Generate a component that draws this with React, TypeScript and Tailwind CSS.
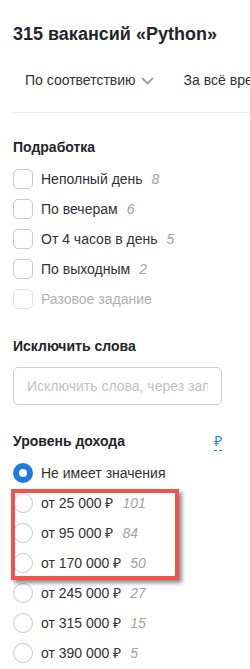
const partTime = [
    { label: 'Неполный день', count: 8 },
    { label: 'По вечерам', count: 6 },
    { label: 'От 4 часов в день', count: 5 },
    { label: 'По выходным', count: 2 },
];

const salaries = [
    { label: 'от 25 000 ₽', count: 101 },
    { label: 'от 95 000 ₽', count: 84 },
    { label: 'от 170 000 ₽', count: 50 },
    { label: 'от 245 000 ₽', count: 27 },
    { label: 'от 315 000 ₽', count: 15 },
    { label: 'от 390 000 ₽', count: 5 },
];

const Count = ({ value }: { value: number }) => (
    <span className="ml-[9px] italic text-[#a3a3a3]">{value}</span>
);

const App = () => {
    return (
        <div className="relative h-[669px] w-[250px] overflow-hidden whitespace-nowrap bg-white pl-[13px] font-['Liberation_Sans',Arial,sans-serif] text-[14px] leading-[20px] text-[#303233]">
            <h1 className="pt-[22px] text-[18px] font-bold leading-[24px] text-[#232529]">
                315 вакансий «Python»
            </h1>

            {/* sort + period */}
            <div className="mt-[24px] flex items-center pl-[12px]">
                <span>По соответствию</span>
                <svg className="ml-[5px] mt-[2px] shrink-0" width="13" height="8" viewBox="0 0 13 8" fill="none">
                    <path d="M1 1l5.5 5.5L12 1" stroke="#9e9e9e" strokeWidth="1.8" />
                </svg>
                <span className="ml-[30px]">За всё время</span>
            </div>

            <div className="mt-[22px] border-t border-[#e8e8e8]" />

            <h2 className="mt-[24px] font-bold text-[#232529]">Подработка</h2>
            <div className="mt-[7px]">
                {partTime.map((item) => (
                    <label key={item.label} className="flex h-[30px] items-center">
                        <span className="h-[20px] w-[20px] shrink-0 rounded-[5px] border border-[#c9c9c9]" />
                        <span className="ml-[8px]">{item.label}</span>
                        <Count value={item.count} />
                    </label>
                ))}
                <label className="flex h-[30px] items-center">
                    <span className="h-[20px] w-[20px] shrink-0 rounded-[5px] border border-[#e4e4e4]" />
                    <span className="ml-[8px] text-[#b0b0b0]">Разовое задание</span>
                </label>
            </div>

            <h2 className="mt-[22px] font-bold text-[#232529]">Исключить слова</h2>
            <input
                className="mt-[11px] h-[38px] w-[209px] rounded-[5px] border border-[#cfcfcf] px-[13px] text-[14px] outline-none placeholder:text-[#c2c2c2]"
                placeholder="Исключить слова, через запятую"
            />

            <div className="mt-[26px] flex w-[209px] items-center justify-between">
                <h2 className="font-bold text-[#232529]">Уровень дохода</h2>
                <span className="border-b border-dashed border-[#2a7fe6] leading-[18px] text-[#2a7fe6]">₽</span>
            </div>
            <div className="mt-[7px]">
                <label className="flex h-[30px] items-center">
                    <span className="flex h-[20px] w-[20px] shrink-0 items-center justify-center rounded-full bg-[#1f7ae6]">
                        <span className="h-[8px] w-[8px] rounded-full bg-white" />
                    </span>
                    <span className="ml-[8px]">Не имеет значения</span>
                </label>
                {salaries.map((item) => (
                    <label key={item.label} className="flex h-[30px] items-center">
                        <span className="h-[20px] w-[20px] shrink-0 rounded-full border border-[#c9c9c9]" />
                        <span className="ml-[8px]">{item.label}</span>
                        <Count value={item.count} />
                    </label>
                ))}
            </div>

            {/* annotation frame */}
            <div className="absolute left-[11px] top-[489px] h-[91px] w-[168px] border-[4px] border-[#f0544c] shadow-[3px_3px_4px_rgba(0,0,0,0.45)]" />
        </div>
    );
};

export default App;
